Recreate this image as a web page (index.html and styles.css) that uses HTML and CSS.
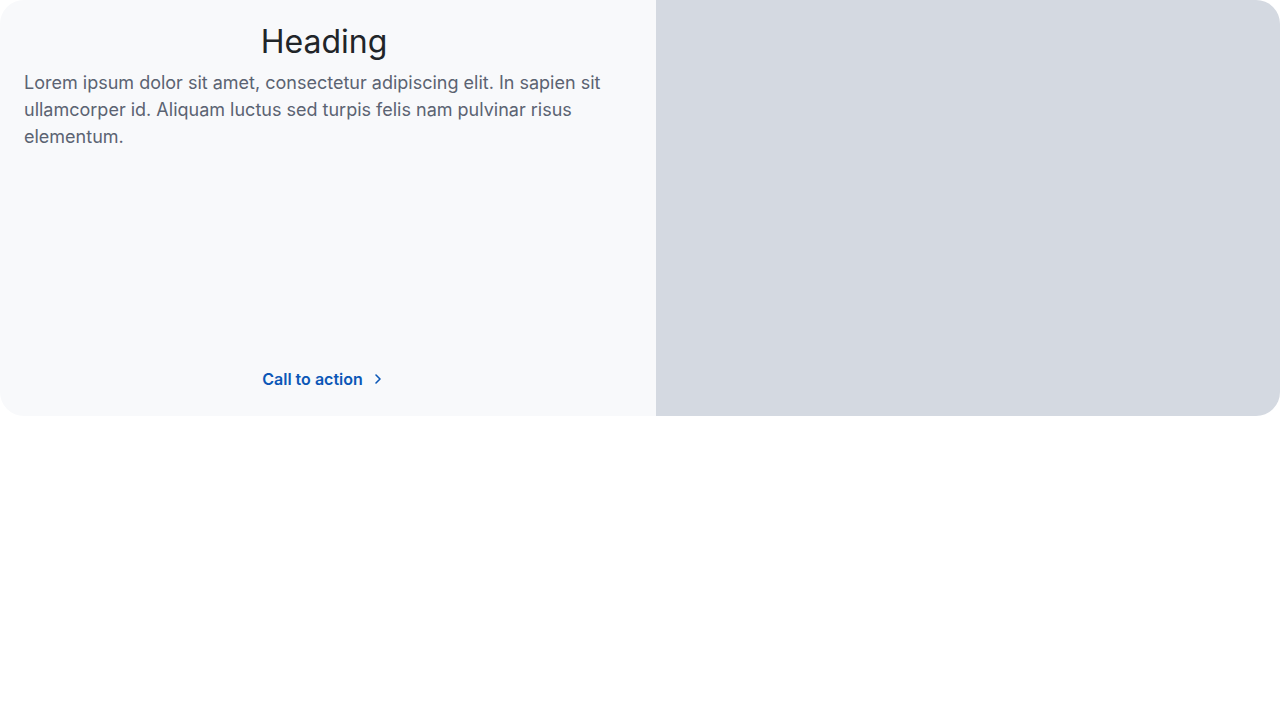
FILE: index.html
```html
<!DOCTYPE html>
<html lang="en">
<head>
<meta charset="utf-8">
<title>Card</title>
<link rel="stylesheet" href="styles.css">
</head>
<body>
<section class="card">
  <div class="content">
    <h2 class="heading">Heading</h2>
    <p class="text">Lorem ipsum dolor sit amet, consectetur adipiscing elit. In sapien sit ullamcorper id. Aliquam luctus sed turpis felis nam pulvinar risus elementum.</p>
    <a class="cta" href="#">Call to action
      <svg class="chev" width="16" height="16" viewBox="0 0 16 16" aria-hidden="true"><path d="M6 4l4 4-4 4" fill="none" stroke="currentColor" stroke-width="1.6" stroke-linecap="round" stroke-linejoin="round"/></svg>
    </a>
  </div>
  <div class="media"></div>
</section>
</body>
</html>
```

FILE: styles.css
```css
* { box-sizing: border-box; }
body {
  margin: 0;
  background: #ffffff;
  font-family: "Inter", "Noto Sans", sans-serif;
}
.card {
  display: flex;
  width: 1280px;
  height: 416px;
  border-radius: 24px;
  overflow: hidden;
}
.content {
  width: 656px;
  flex: none;
  background: #f8f9fb;
  display: flex;
  flex-direction: column;
  align-items: center;
  padding: 22px 32px 25px 24px;
}
.heading {
  margin: 0;
  font-size: 32px;
  line-height: 40px;
  font-weight: 400;
  color: #212529;
  text-align: center;
}
.text {
  margin: 7px -8px 0 0;
  font-size: 18px;
  line-height: 27px;
  color: #5b6372;
  align-self: stretch;
}
.cta {
  margin-top: auto;
  display: flex;
  align-items: center;
  gap: 7px;
  font-size: 16px;
  line-height: 24px;
  font-weight: 600;
  color: #0b57b7;
  text-decoration: none;
}
.chev { display: block; }
.media {
  flex: 1;
  background: #d4d9e1;
}
```
